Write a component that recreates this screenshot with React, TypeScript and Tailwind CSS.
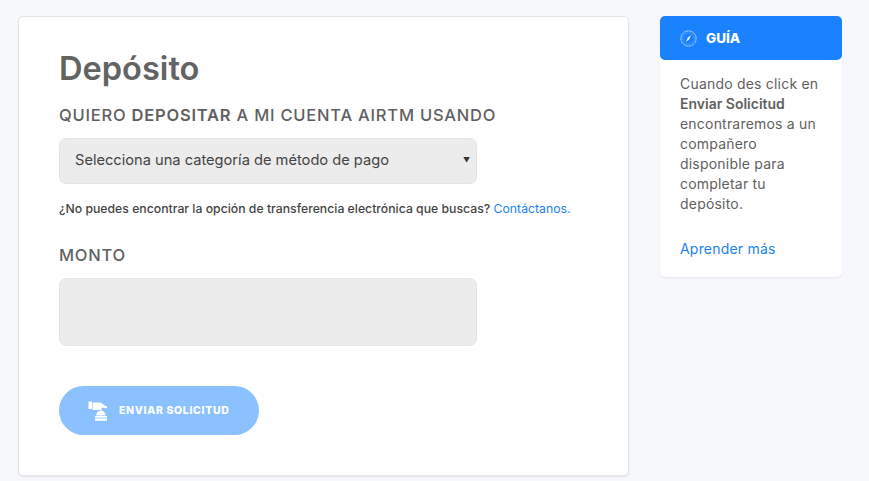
import React from "react";

function Compass() {
  return (
    <svg width="17" height="17" viewBox="0 0 17 17" fill="none" stroke="#fff">
      <circle cx="8.5" cy="8.5" r="7.6" strokeWidth="0.8" strokeDasharray="1.2 0.5" />
      <circle cx="8.5" cy="8.5" r="5.8" strokeWidth="0.4" opacity="0.5" />
      <path d="M10.6 5.6 L9.2 9.2 L7.8 7.8 Z M6.4 11.4 L7.8 7.8 L9.2 9.2 Z" fill="#fff" strokeWidth="0.2" />
    </svg>
  );
}

function Bell() {
  return (
    <svg width="21" height="20" viewBox="0 0 21 20" fill="#fff">
      <rect x="0.5" y="0.5" width="3.5" height="7.5" />
      <path d="M4.6 1.5 H11 C13 1.5 14.5 2.6 16 4.2 L18.6 5.2 C19.8 6 19 7.8 17.6 7.3 L14 6.6 L13.4 8 L10 9 H4.6 Z" />
      <rect x="12.2" y="8" width="1.4" height="2.2" />
      <path d="M8.2 14.4 C8.2 11.6 10.2 9.8 12.8 9.8 C15.4 9.8 17.4 11.6 17.4 14.4 Z" />
      <rect x="7" y="15" width="12" height="1.6" />
      <rect x="7" y="17.4" width="12" height="2.4" />
    </svg>
  );
}

export default function App() {
  return (
    <div className="h-[481px] w-[869px] overflow-hidden bg-[#f6f8fc] font-['Inter',sans-serif] text-[#5f5f5f]">
      <div className="flex items-start gap-[31px] pl-[18px] pt-4">
        <main className="h-[460px] w-[611px] rounded-[5px] border border-[#e4e5e7] bg-white pl-10 pt-[30px] shadow-[0_1px_2px_rgba(0,0,0,0.08)]">
          <h1 className="text-[32.6px] leading-[42px] font-semibold text-[#636363]">Depósito</h1>
          <p className="mt-[14px] text-[16.5px] leading-[24px] tracking-[0.78px] font-medium">
            QUIERO <span className="font-semibold">DEPOSITAR</span> A MI CUENTA AIRTM USANDO
          </p>
          <div className="relative mt-[11px] flex h-[46px] w-[418px] items-center rounded-[7px] border border-[#e5e5e5] bg-[#ececec] pl-[15px] text-[14.65px] text-[#444444]">
            Selecciona una categoría de método de pago
            <span className="absolute right-[6px] top-[16px] text-[7px] leading-[12px] text-[#333333]">▼</span>
          </div>
          <p className="mt-[16px] text-[12.25px] leading-[18px] font-medium text-[#444444]">
            ¿No puedes encontrar la opción de transferencia electrónica que buscas?{" "}
            <span className="font-normal text-[#1b82f6]">Contáctanos.</span>
          </p>
          <h2 className="mt-[25px] text-[16.5px] leading-[24px] tracking-[0.78px] font-medium">MONTO</h2>
          <div className="mt-[11px] h-[68px] w-[418px] rounded-[7px] border border-[#e5e5e5] bg-[#ececec]" />
          <button className="mt-10 flex h-[49px] w-[200px] items-center rounded-full bg-[#8cc1ff] pl-[29px] text-white">
            <Bell />
            <span className="ml-[10px] text-[10.5px] font-extrabold tracking-[0.66px]">ENVIAR SOLICITUD</span>
          </button>
        </main>
        <aside className="h-[261px] w-[182px] rounded-[5px] bg-white shadow-[0_1px_2px_rgba(0,0,0,0.08)]">
          <div className="flex h-11 items-center rounded-[5px] bg-[#1a82ff] pl-5">
            <Compass />
            <span className="ml-[9px] text-[13.5px] font-extrabold text-white">GUÍA</span>
          </div>
          <div className="pl-5 pr-3 pt-[14px] text-[14px] leading-[20px] tracking-[0.2px] text-[#5f5f5f]">
            <p>
              Cuando des click en <span className="font-semibold tracking-normal">Enviar Solicitud</span> encontraremos a un compañero disponible para completar tu depósito.
            </p>
            <p className="mt-[25px] text-[#1b82f6]">Aprender más</p>
          </div>
        </aside>
      </div>
    </div>
  );
}
